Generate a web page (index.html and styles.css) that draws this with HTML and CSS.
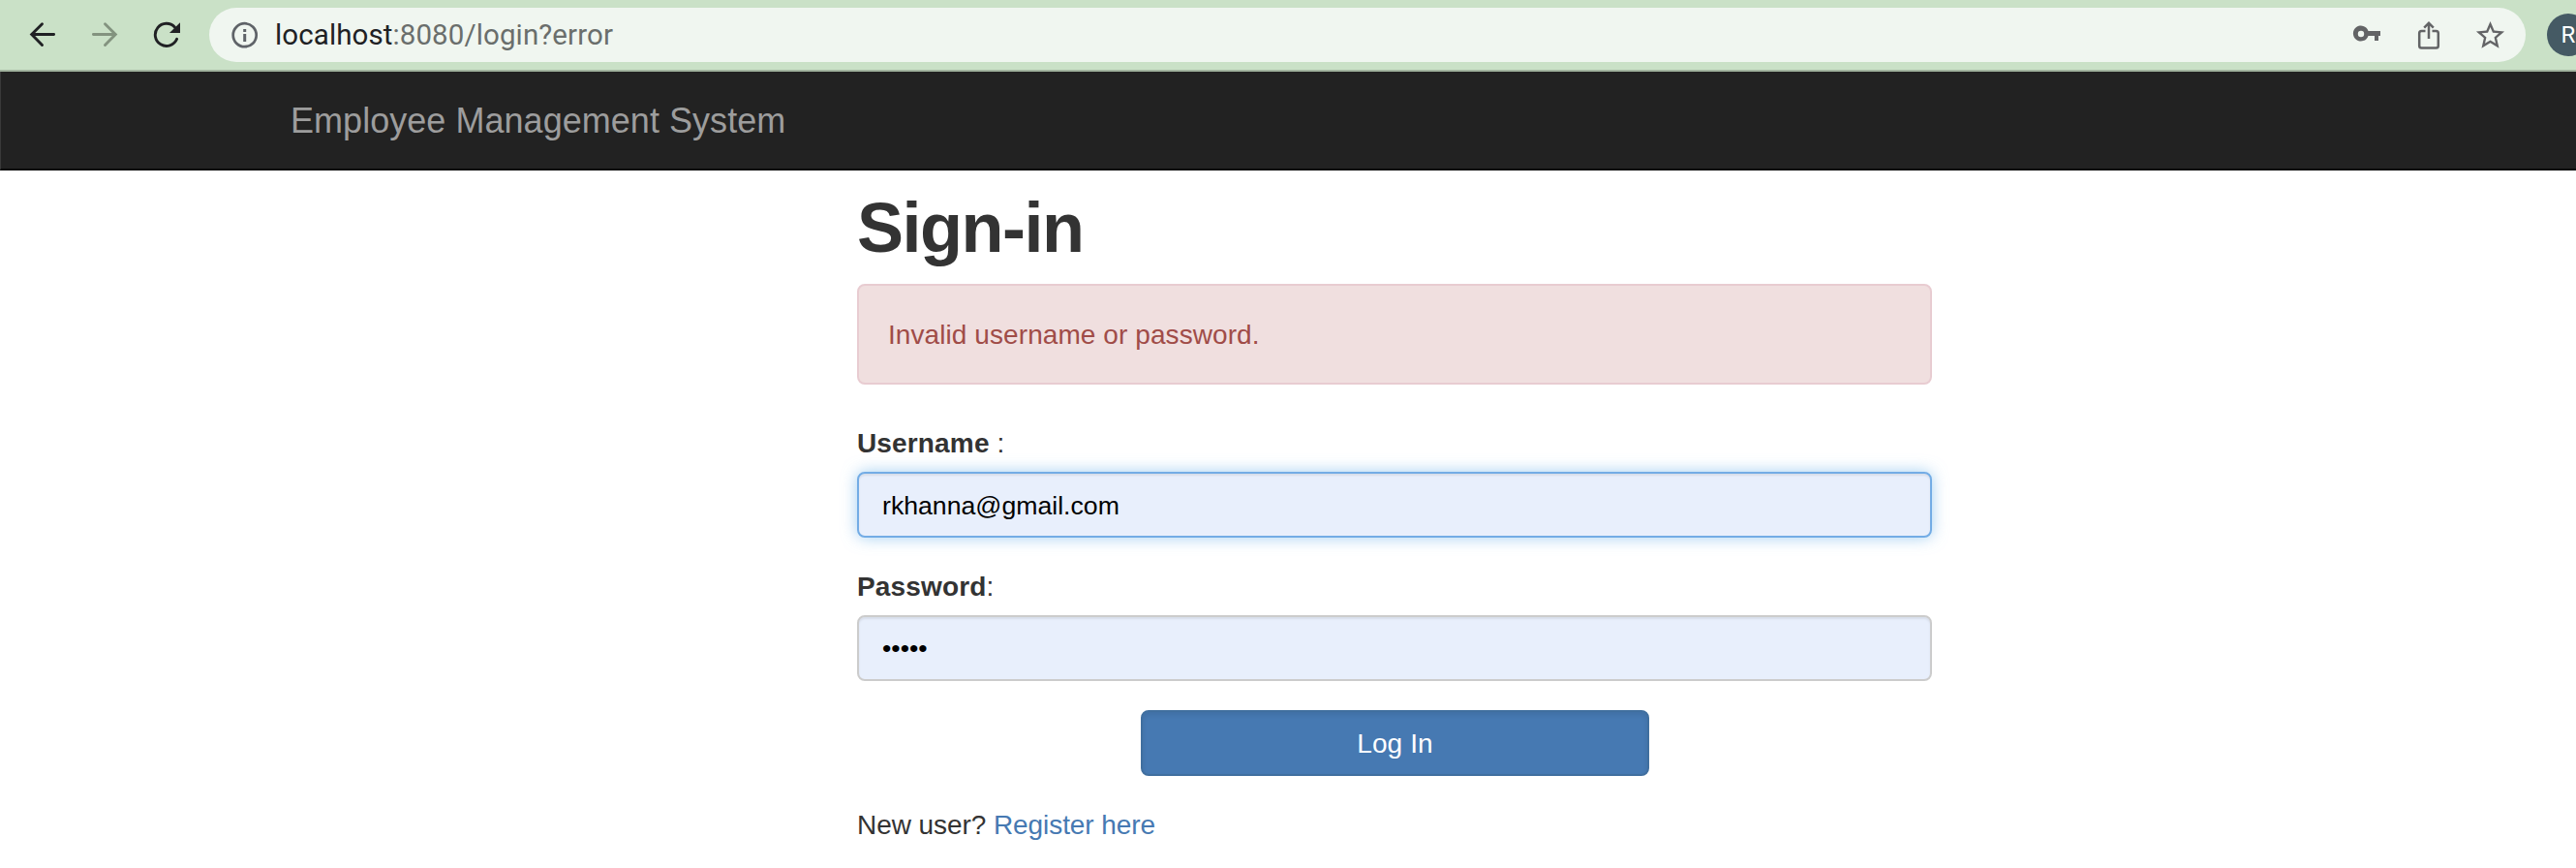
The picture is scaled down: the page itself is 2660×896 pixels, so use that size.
FILE: index.html
```html
<!DOCTYPE html>
<html lang="en">
<head>
<meta charset="utf-8">
<title>Employee Management System</title>
<link rel="stylesheet" href="styles.css">
</head>
<body>
<header class="toolbar">
  <div class="nav-icons">
    <svg class="icon" width="28" height="28" viewBox="0 0 28 28" fill="none" stroke="#202124" stroke-width="2.900" stroke-linecap="round"><path d="M25.600 13.500H3M13.500 2.700L2.700 13.500L13.500 24.500"/></svg>
    <svg class="icon" width="28" height="28" viewBox="0 0 28 28" fill="none" stroke="#83937f" stroke-width="2.900" stroke-linecap="round"><path d="M2.400 13.500H25M14.500 2.700L25.300 13.500L14.500 24.500"/></svg>
    <svg class="icon" width="28" height="28" viewBox="0 0 28 28"><path d="M24.600 18.300A11.600 11.600 0 1 1 22.400 6" fill="none" stroke="#202124" stroke-width="2.900" stroke-linecap="round"/><path d="M28 1.300V12H17Z" fill="#202124"/></svg>
  </div>
  <div class="omnibox">
    <svg class="icon" width="28" height="28" viewBox="0 0 28 28"><circle cx="13.700" cy="14.200" r="12" fill="none" stroke="#5f6368" stroke-width="2.700"/><path d="M12.200 13H15.200V21H12.200ZM12.200 8H15.200V11H12.200Z" fill="#5f6368"/></svg>
    <span class="url"><span class="host">localhost</span>:8080/login?error</span>
    <div class="actions">
      <svg class="icon" width="28" height="28" viewBox="-1 0 28 28" overflow="visible"><path fill="#636466" fill-rule="evenodd" d="M15.500 10H28V15H26V20H22V15H15.500A8 8 0 1 1 15.500 10ZM11.200 13A3.200 3.200 0 1 0 4.800 13A3.200 3.200 0 1 0 11.200 13Z"/></svg>
      <svg class="icon" width="28" height="30" viewBox="-1 0 28 30" fill="none" stroke="#636466" stroke-width="2.500"><path d="M10.500 11H6.500Q4.200 11 4.200 13.300V26.200Q4.200 28.500 6.500 28.500H21.500Q23.800 28.500 23.800 26.200V13.300Q23.800 11 21.500 11H17.500M14 19V3M9.200 7.600L14 2.700L18.800 7.600"/></svg>
      <svg class="icon star" width="35" height="35" viewBox="0 0 24 24"><path fill="#636466" fill-rule="evenodd" d="M22 9.240l-7.190-.620L12 2 9.190 8.630 2 9.240l5.460 4.730L5.820 21 12 17.270 18.180 21l-1.630-7.030L22 9.240zM12 15.400l-3.760 2.270 1-4.280-3.320-2.880 4.380-.380L12 6.100l1.710 4.040 4.380.380-3.320 2.880 1 4.280L12 15.400z"/></svg>
    </div>
  </div>
  <div class="avatar">R</div>
</header>
<nav class="navbar"><a class="brand">Employee Management System</a></nav>
<main class="login">
  <h1 class="title">Sign-in</h1>
  <div class="alert">Invalid username or password.</div>
  <form>
    <div class="group"><div class="label"><label class="name">Username</label> :</div><div class="field focused">rkhanna@gmail.com</div></div>
    <div class="group"><div class="label"><label class="name">Password</label>:</div><div class="field masked">•••••</div></div>
    <button class="submit" type="button">Log In</button>
  </form>
  <p class="register">New user? <a class="link">Register here</a></p>
</main>
</body>
</html>
```
FILE: styles.css
```css
* { box-sizing: border-box; }
body {
  margin: 0;
  height: 896px;
  overflow: hidden;
  background: #fff;
  color: #333;
  font: 28px/40px "Liberation Sans", Arial, sans-serif;
}
.icon { display: block; flex: none; }
.toolbar {
  display: flex;
  align-items: center;
  width: 2660px;
  height: 74px;
  padding-left: 30px;
  background: #cae1c7;
  border-bottom: 2px solid #a2b49f;
  overflow: hidden;
}
.nav-icons { display: flex; flex: none; gap: 36px; width: 186px; }
.omnibox {
  display: flex;
  flex: none;
  align-items: center;
  width: 2392px;
  height: 56px;
  padding: 0 21px 0 23px;
  border-radius: 28px;
  background: #f0f6f0;
}
.url {
  margin-left: 17px;
  font-family: Roboto, sans-serif;
  font-size: 29.5px;
  color: #6a6e6c;
  letter-spacing: 0.1px;
}
.host { color: #202124; }
.actions { display: flex; align-items: center; gap: 36px; margin-left: auto; }
.star { margin: 0 -2px 0 -3px; }
.avatar {
  flex: none;
  width: 44px;
  height: 44px;
  margin-left: 22px;
  border-radius: 50%;
  background: #455a64;
  color: #fff;
  font: 24px/44px Roboto, sans-serif;
  text-align: center;
}
.navbar {
  height: 102px;
  padding: 31px 0 0 299px;
  background: #222;
  border-bottom: 2px solid #080808;
  border-left: 1px solid #3a3a3a;
}
.brand { color: #9d9d9d; font-size: 36px; letter-spacing: 0.04px; }
.login { width: 1110px; margin: 20px 0 0 885px; }
.title {
  margin: 0 0 18px;
  font-size: 72px;
  line-height: 79px;
  font-weight: bold;
  letter-spacing: -1.5px;
}
.alert {
  height: 104px;
  margin-bottom: 41px;
  padding: 31px 30px 29px;
  border: 2px solid #e8ccd1;
  border-radius: 8px;
  background: #f0dfdf;
  color: #a04c48;
  letter-spacing: 0.08px;
}
.group { margin-bottom: 31px; }
.label { margin-bottom: 9px; }
.name { font-weight: bold; letter-spacing: 0.15px; }
.field {
  height: 68px;
  padding: 14px 24px 12px;
  border: 2px solid #ccc;
  border-radius: 8px;
  background: #e8effc;
  box-shadow: inset 0 2px 2px rgba(0, 0, 0, 0.075);
  color: #000;
  font-size: 26.67px;
  line-height: 38px;
}
.masked { padding-top: 13px; }
.focused {
  border-color: #73ace5;
  box-shadow: inset 0 2px 2px rgba(0, 0, 0, 0.075), 0 0 16px rgba(102, 175, 233, 0.6);
}
.submit {
  display: block;
  width: 525px;
  height: 68px;
  margin: -1px 0 31px 293px;
  padding: 13px 24px 11px;
  border: 2px solid #406f9f;
  border-radius: 8px;
  background: #4679b2;
  box-shadow: inset 0 3px 5px rgba(0, 0, 0, 0.08);
  color: #fff;
  font: inherit;
  letter-spacing: 0.1px;
}
.register { margin: 0; letter-spacing: -0.07px; }
.link { color: #4679b2; }
```
